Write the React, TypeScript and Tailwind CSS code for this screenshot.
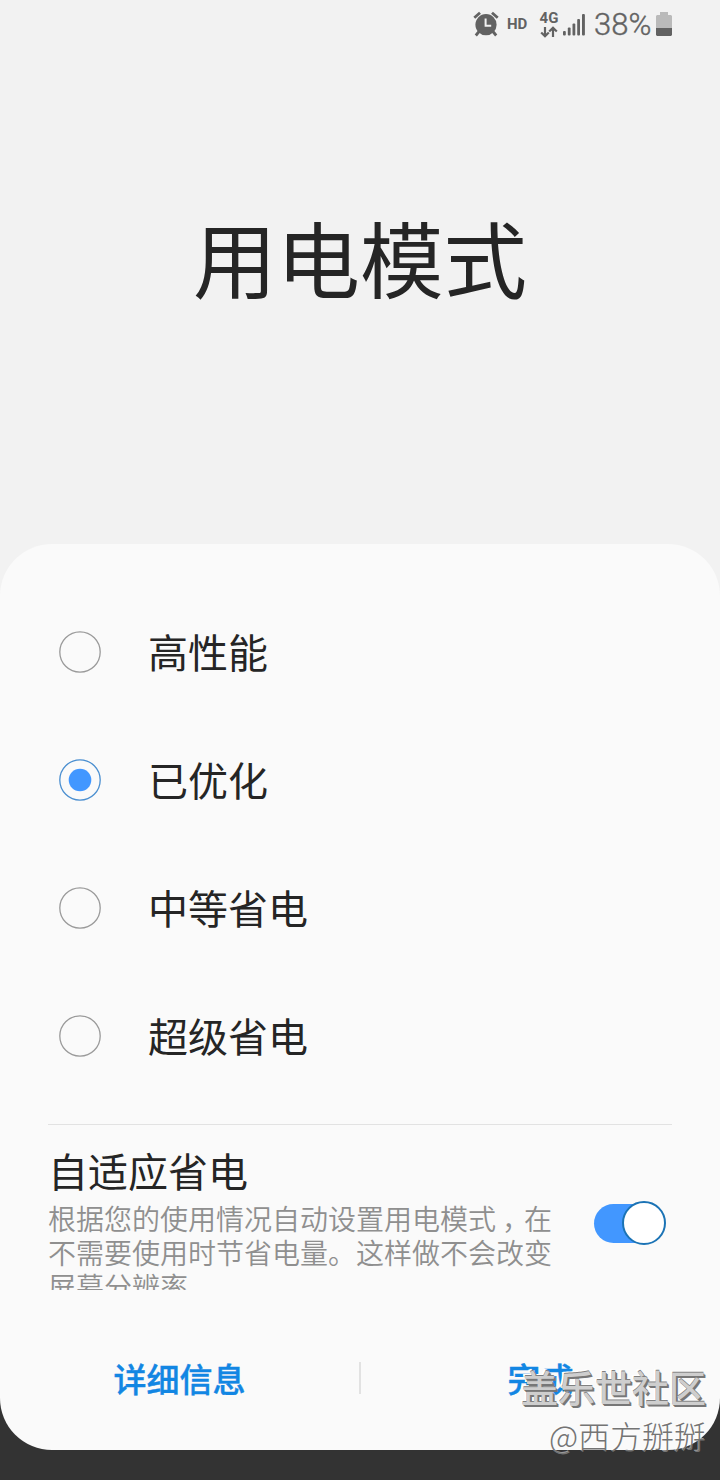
import React, { useState } from "react";

const modes = ["高性能", "已优化", "中等省电", "超级省电"];

function StatusBar() {
  return (
    <header className="flex h-12 items-center justify-end pr-12 text-[#626262]">
      <svg className="mr-[7px] h-7 w-7" viewBox="0 0 28 28" fill="none" aria-label="闹钟">
        <path d="M2.300 7.800 8 2.700M25.700 7.800 20 2.700" stroke="currentColor" strokeWidth="2.800" />
        <path d="m7.500 21-3.700 4.500M20.500 21l3.700 4.500" stroke="currentColor" strokeWidth="2.800" />
        <circle cx="14" cy="14.700" r="10.600" fill="currentColor" />
        <path d="M13.600 8.500v7.300h5.600" stroke="#f2f2f2" strokeWidth="2" />
      </svg>
      <span className="w-[22px] font-[Roboto] text-[15px] leading-5 font-bold">HD</span>
      <span className="ml-[10px] flex w-[20px] flex-col items-center">
        <span className="h-[14px] font-[Roboto] text-[15px] leading-[15px] font-bold">4G</span>
        <svg className="mt-px h-[12px] w-[18px]" viewBox="0 0 18 12" fill="none" stroke="currentColor" strokeWidth="2.200">
          <path d="M5 1v9.500M1.200 6.500 5 10.300l3.800-3.800M13 11V1.500M9.200 5.500 13 1.700l3.800 3.800" />
        </svg>
      </span>
      <svg className="ml-[4px] h-[24px] w-[24px]" viewBox="0 0 24 24" fill="currentColor">
        <rect x="0" y="19" width="2.800" height="4.500" rx="1" />
        <rect x="4.800" y="15.500" width="2.800" height="8" rx="1" />
        <rect x="9.500" y="11.500" width="2.800" height="12" rx="1" />
        <rect x="14.200" y="7" width="2.800" height="16.500" rx="1" />
        <rect x="19" y="2" width="2.900" height="21.500" rx="1" />
      </svg>
      <span className="ml-[7px] w-[57px] pt-0.5 font-[Roboto] text-[31px] leading-8 font-light whitespace-nowrap [-webkit-text-stroke:0.4px_#626262]">38%</span>
      <svg className="ml-[5px] h-6 w-4" viewBox="0 0 16 24">
        <path d="M4 0h8v3h3l1 1v12H0V4l1-1h3z" fill="#bababa" />
        <path d="M0 16h16v7l-1 1H1l-1-1z" fill="currentColor" />
      </svg>
    </header>
  );
}

function Radio({ checked }: { checked: boolean }) {
  return (
    <svg className="h-[42px] w-[42px]" viewBox="0 0 42 42" fill="none">
      <circle cx="21" cy="21" r="20.200" stroke={checked ? "#4b8fd0" : "#9a9a9a"} strokeWidth="1.300" />
      {checked && <circle cx="21" cy="21" r="11.300" fill="#4297ff" />}
    </svg>
  );
}

export default function App() {
  const [selected, setSelected] = useState(1);
  const [adaptive, setAdaptive] = useState(true);

  return (
    <div className="relative flex h-[1480px] w-[720px] flex-col overflow-hidden bg-[linear-gradient(#f2f2f2_1000px,#333333_1000px)] font-['Noto_Sans_CJK_SC',sans-serif] text-[#252525]">
      <StatusBar />
      <h1 className="flex h-[496px] justify-center pt-[148px] text-[83.5px] leading-[120px] font-normal">用电模式</h1>

      <main className="flex h-[906px] flex-col rounded-[52px] bg-[#fafafa] pt-11">
        <div role="radiogroup">
          {modes.map((mode, i) => (
            <button
              key={mode}
              role="radio"
              aria-checked={selected === i}
              onClick={() => setSelected(i)}
              className="flex h-32 w-full items-center pl-[59px] text-left"
            >
              <Radio checked={selected === i} />
              <span className="ml-[47px] pb-0.5 text-[40px] leading-[60px]">{mode}</span>
            </button>
          ))}
        </div>

        <section className="mx-12 mt-6 flex h-[166px] overflow-hidden border-t border-[#e2e2e2]">
          <div className="w-[520px] pt-[15px]">
            <h2 className="text-[40px] leading-[60px]">自适应省电</h2>
            <p className="mt-px text-[28px] leading-[34px] font-[350] whitespace-nowrap text-[#8f8f8f]">
              根据您的使用情况自动设置用电模式<span className="relative left-[6px]">，</span>在<br />
              不需要使用时节省电量。这样做不会改变<br />
              屏幕分辨率
            </p>
          </div>
          <button
            role="switch"
            aria-checked={adaptive}
            onClick={() => setAdaptive(!adaptive)}
            className="mt-[76px] ml-[26px] flex h-11 w-[72px] items-center"
          >
            <span className="flex h-[39px] w-[68px] items-center justify-end rounded-full bg-[#4297ff]">
              <span className="-mr-1 h-11 w-11 shrink-0 rounded-full border-2 border-[#1b73b5] bg-white" />
            </span>
          </button>
        </section>

        <footer className="mt-[54px] flex h-[68px] items-center text-[33px] font-medium text-[#1286e3] [-webkit-text-stroke:0.4px_#1286e3]">
          <button className="h-[50px] w-[359px] leading-[48px]">详细信息</button>
          <span className="h-8 w-0.5 bg-[#e2e2e2]" />
          <button className="h-[50px] w-[359px] leading-[48px]">完成</button>
        </footer>
      </main>

      <div className="pointer-events-none absolute top-[1362px] right-[14px] text-right whitespace-nowrap">
        <p className="text-[37px] leading-[50px] font-medium text-[#cecece] [text-shadow:0_-1px_0_#808080,1px_1px_0_#777777,2px_2px_0_#777777,-2px_-2px_0_#ffffff]">盖乐世社区</p>
        <p className="text-[32px] leading-[47px] font-light text-[#747474] [text-shadow:-1px_-1px_0_#ffffff80]">@西方掰掰</p>
      </div>
    </div>
  );
}
